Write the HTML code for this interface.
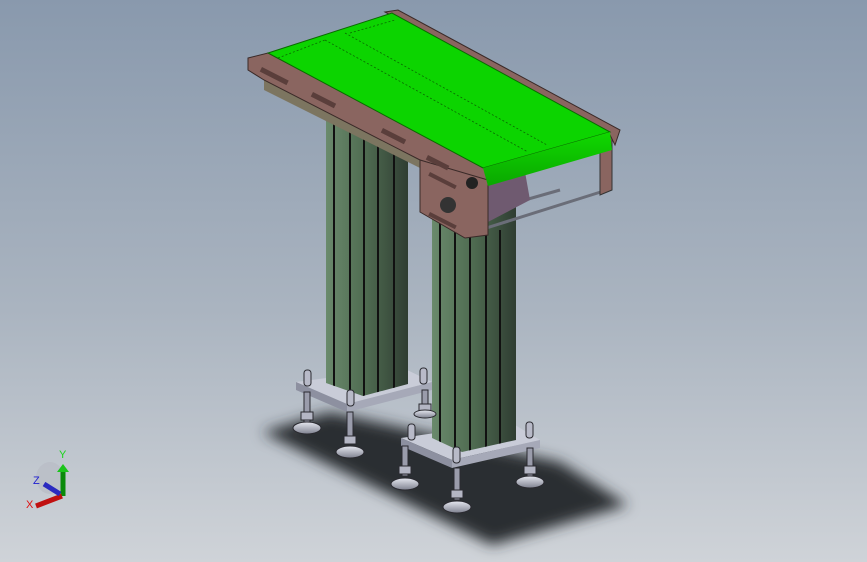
<!DOCTYPE html>
<html><head><meta charset="utf-8"><style>
html,body{margin:0;padding:0;width:867px;height:562px;overflow:hidden}
svg{display:block}
</style></head><body>
<svg width="867" height="562" viewBox="0 0 867 562" xmlns="http://www.w3.org/2000/svg">
<defs>
<linearGradient id="bg" x1="0" y1="0" x2="0" y2="1">
<stop offset="0" stop-color="#8999ad"/><stop offset="0.55" stop-color="#aab4c0"/><stop offset="1" stop-color="#cfd3d8"/>
</linearGradient>
<filter id="bl" x="-20%" y="-20%" width="140%" height="140%"><feGaussianBlur stdDeviation="7"/></filter>
<linearGradient id="pil" x1="0" y1="0" x2="1" y2="0">
<stop offset="0" stop-color="#6a8a6c"/><stop offset="0.5" stop-color="#4e6a50"/><stop offset="1" stop-color="#2f3d32"/>
</linearGradient>
<linearGradient id="belt" x1="0" y1="0" x2="0" y2="1"><stop offset="0" stop-color="#10d800"/><stop offset="1" stop-color="#0aa800"/></linearGradient>
<linearGradient id="pad" x1="0" y1="0" x2="0" y2="1"><stop offset="0" stop-color="#e6e8f0"/><stop offset="1" stop-color="#7f8290"/></linearGradient>
<clipPath id="c1"><polygon points="326,100 408,100 408,384 363,396 326,383"/></clipPath>
<clipPath id="c2"><polygon points="432,205 516,205 516,440 462,452 432,438"/></clipPath>
</defs>
<rect width="867" height="562" fill="url(#bg)"/>
<!-- shadow -->
<polygon points="262,432 330,412 560,462 628,505 492,545" fill="#2c2f33" filter="url(#bl)"/>
<!-- left baseplate -->
<polygon points="296,382 347,404 432,382 403,368" fill="#c9ccd8"/>
<polygon points="296,382 347,404 347,412 296,390" fill="#8d90a0"/>
<polygon points="347,404 432,382 432,390 347,412" fill="#a6a9b8"/>
<!-- left pillar -->
<g clip-path="url(#c1)">
<rect x="326" y="100" width="82" height="300" fill="url(#pil)"/>
<g stroke="#111" stroke-width="2">
<line x1="334" y1="115" x2="334" y2="400"/><line x1="350" y1="120" x2="350" y2="400"/><line x1="364" y1="125" x2="364" y2="400"/><line x1="378" y1="130" x2="378" y2="400"/><line x1="394" y1="140" x2="394" y2="400"/>
</g></g>
<!-- front baseplate -->
<polygon points="401,438 452,460 540,440 510,422" fill="#c9ccd8"/>
<polygon points="401,438 452,460 452,468 401,446" fill="#8d90a0"/>
<polygon points="452,460 540,440 540,448 452,468" fill="#a6a9b8"/>
<!-- front pillar -->
<g clip-path="url(#c2)">
<rect x="432" y="205" width="84" height="250" fill="url(#pil)"/>
<g stroke="#111" stroke-width="2">
<line x1="440" y1="220" x2="440" y2="455"/><line x1="455" y1="222" x2="455" y2="455"/><line x1="470" y1="225" x2="470" y2="455"/><line x1="486" y1="228" x2="486" y2="455"/><line x1="500" y1="230" x2="500" y2="455"/>
</g></g>
<!-- feet -->
<g stroke="#2a2a30" stroke-width="1">
<g fill="#9a9cab">
<rect x="304" y="392" width="6" height="30"/><rect x="347" y="412" width="6" height="32"/><rect x="422" y="390" width="6" height="22"/>
<rect x="402" y="446" width="6" height="30"/><rect x="454" y="468" width="6" height="32"/><rect x="527" y="448" width="6" height="28"/>
</g>
<g fill="#b4b6c4">
<rect x="301" y="412" width="12" height="8"/><rect x="344" y="436" width="12" height="8"/><rect x="419" y="404" width="12" height="7"/>
<rect x="399" y="466" width="12" height="8"/><rect x="451" y="490" width="12" height="8"/><rect x="524" y="466" width="12" height="8"/>
</g>
<g fill="url(#pad)">
<ellipse cx="307" cy="428" rx="14" ry="6"/><ellipse cx="350" cy="452" rx="14" ry="6"/><ellipse cx="425" cy="414" rx="11" ry="4"/>
<ellipse cx="405" cy="484" rx="14" ry="6"/><ellipse cx="457" cy="507" rx="14" ry="6"/><ellipse cx="530" cy="482" rx="14" ry="6"/>
</g>
<g fill="#b8bac8">
<rect x="304" y="370" width="7" height="16" rx="3"/><rect x="347" y="390" width="7" height="16" rx="3"/><rect x="420" y="368" width="7" height="16" rx="3"/>
<rect x="408" y="424" width="7" height="16" rx="3"/><rect x="453" y="447" width="7" height="16" rx="3"/><rect x="526" y="422" width="7" height="16" rx="3"/>
</g>
</g>
<!-- rods and right bracket -->
<g stroke="#6a6d78" stroke-width="3"><line x1="480" y1="230" x2="607" y2="190"/><line x1="490" y1="210" x2="560" y2="190"/></g>
<polygon points="570,140 612,132 612,190 600,195 600,152 570,158" fill="#8a6560" stroke="#333" stroke-width="1"/>
<!-- motor -->
<polygon points="480,185 525,172 530,200 488,222" fill="#6f5a70"/>
<!-- side frame under belt -->
<polygon points="264,80 420,160 420,168 264,90" fill="#7c7560"/>
<!-- left frame -->
<polygon points="248,58 268,53 488,168 488,185 420,160 264,80 248,70" fill="#8a6560" stroke="#3a2a28" stroke-width="1"/>
<polygon points="420,160 488,180 488,235 465,238 420,212" fill="#8a6560" stroke="#3a2a28" stroke-width="1"/>
<circle cx="448" cy="205" r="8" fill="#333"/><circle cx="472" cy="183" r="6" fill="#222"/>
<g fill="#5a3e3b">
<rect x="262" y="67" width="30" height="5" transform="rotate(27 262 67)"/>
<rect x="313" y="92" width="26" height="5" transform="rotate(27 313 92)"/>
<rect x="383" y="128" width="26" height="5" transform="rotate(27 383 128)"/>
<rect x="428" y="155" width="24" height="5" transform="rotate(27 428 155)"/>
<rect x="430" y="172" width="30" height="4" transform="rotate(27 430 172)"/>
<rect x="430" y="212" width="30" height="4" transform="rotate(27 430 212)"/>
</g>
<!-- back rail -->
<polygon points="385,12 398,10 620,130 615,145 610,135" fill="#8a6560" stroke="#3a2a28" stroke-width="1"/>
<!-- belt -->
<polygon points="268,53 392,13 610,132 483,168" fill="#0cd400" stroke="#0a6a00" stroke-width="1"/>
<polygon points="483,168 610,132 612,150 488,186" fill="url(#belt)"/>
<g stroke="#0a6a00" stroke-width="0.8" stroke-dasharray="2,2" fill="none">
<polyline points="325,40 528,152"/><polyline points="345,33 547,145"/><polyline points="278,58 325,40"/><polyline points="350,33 395,20"/>
</g>
<!-- axis triad -->
<ellipse cx="50" cy="478" rx="14" ry="16" fill="#b8bcc4" opacity="0.7"/>
<line x1="63" y1="496" x2="63" y2="470" stroke="#0a8a0a" stroke-width="5"/>
<polygon points="57,472 63,464 69,472" fill="#1bc41b"/>
<line x1="62" y1="496" x2="36" y2="506" stroke="#c01010" stroke-width="5"/>
<line x1="60" y1="494" x2="44" y2="484" stroke="#2a2ac0" stroke-width="5"/>
<text x="59" y="458" font-family="Liberation Sans, sans-serif" font-size="11" fill="#1bd41b">Y</text>
<text x="33" y="484" font-family="Liberation Sans, sans-serif" font-size="11" fill="#2020d0">Z</text>
<text x="26" y="508" font-family="Liberation Sans, sans-serif" font-size="11" fill="#e01010">X</text>
</svg>
</body></html>
